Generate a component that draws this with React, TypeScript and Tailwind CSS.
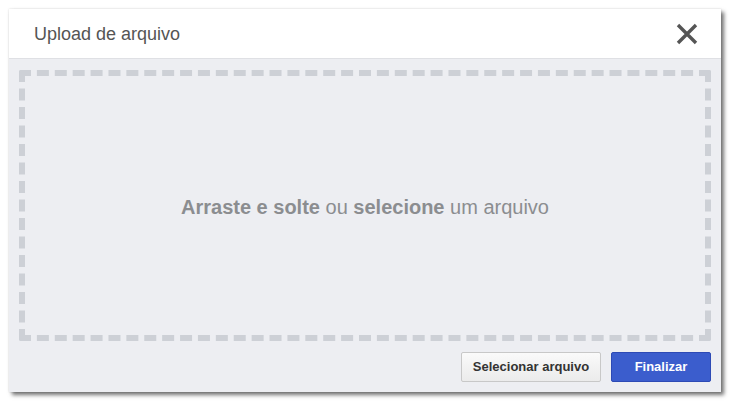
import React from 'react'

export default function App() {
  return (
    <div className="w-[731px] h-[403px] bg-white pt-[9px] pl-[9px] font-['Liberation_Sans',Arial,sans-serif]">
      <div className="w-[712px] h-[383px] flex flex-col bg-[#edeef2] shadow-[3px_3px_4px_rgba(0,0,0,0.55),0_0_2px_rgba(0,0,0,0.15)]">
        {/* Header */}
        <div className="h-[51px] flex items-center justify-between pl-[25px] pr-[22px] bg-white border-b border-[#dfe0e4]">
          <span className="text-[18px] text-[#555] pt-[2px]">Upload de arquivo</span>
          <button className="text-[#555]">
            <svg width="24" height="24" viewBox="0 0 24 24" fill="none" stroke="currentColor" strokeWidth="3.4" strokeLinecap="butt">
              <path d="M3 3 L21 21 M21 3 L3 21" />
            </svg>
          </button>
        </div>

        {/* Drop zone */}
        <div className="flex-1 flex flex-col pt-[11px] px-[10px] pb-[10px]">
          <div className="h-[271px] flex items-center justify-center border-[6px] border-dashed border-[#cdd0d6] rounded-[2px]">
            <p className="text-[20px] text-[#8b8d90] pt-[2px]">
              <b>Arraste e solte</b> ou <b>selecione</b> um arquivo
            </p>
          </div>

          {/* Footer */}
          <div className="flex justify-end gap-[10px] mt-[11px]">
            <button className="w-[140px] h-[30px] text-[13px] font-bold text-[#333] bg-gradient-to-b from-[#fafafa] to-[#ebebeb] border border-[#c8c8c8] rounded-[2px]">
              Selecionar arquivo
            </button>
            <button className="w-[100px] h-[30px] text-[13px] font-bold text-white bg-[#3b5dcd] border border-[#2d4ab5] rounded-[2px]">
              Finalizar
            </button>
          </div>
        </div>
      </div>
    </div>
  )
}
